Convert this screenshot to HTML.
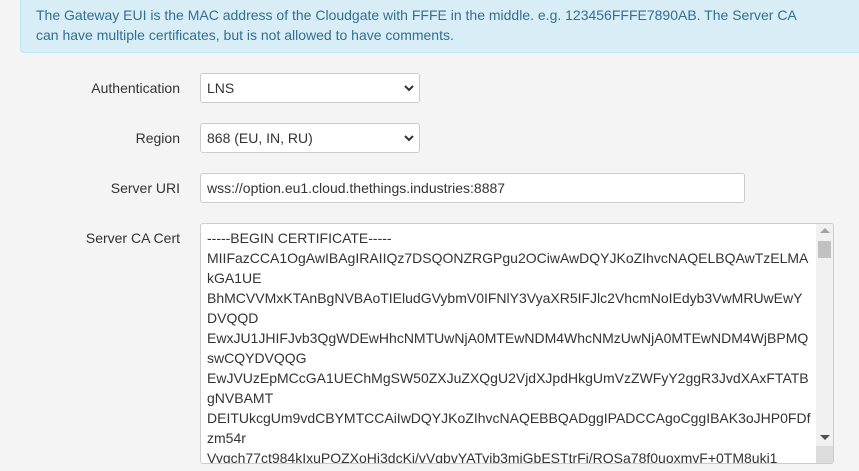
<!DOCTYPE html>
<html><head><style>
body{margin:0;background:#f4f4f4;font-family:"Liberation Sans",sans-serif;font-size:14px;color:#333;width:859px;height:471px;overflow:hidden;position:relative}
.alert{position:absolute;left:20px;top:-10px;width:860px;height:63px;background:#d9edf7;border:1px solid #bce8f1;border-radius:4px;color:#31708f;line-height:20px;box-sizing:border-box;padding:14px 15px 0 15px}
.lbl{position:absolute;right:679px;text-align:right}
.ctl{position:absolute;left:200px;background:#fff;border:1px solid #ccc;border-radius:3px;box-sizing:border-box;padding-left:6px;line-height:28px;color:#333}
.chev{position:absolute;right:5px;top:10px}
.ta{position:absolute;left:200px;top:223px;width:634px;height:241px;background:#fff;border:1px solid #ccc;border-radius:3px;box-sizing:border-box;overflow:hidden}
.tx{position:absolute;left:6px;top:4px;line-height:20px;white-space:nowrap}
.sb{position:absolute;right:0;top:0;width:17px;height:100%;background:#f1f1f1}
</style></head><body>
<div class="alert">The Gateway EUI is the MAC address of the Cloudgate with FFFE in the middle. e.g. 123456FFFE7890AB. The Server CA<br>can have multiple certificates, but is not allowed to have comments.</div>

<div class="lbl" style="top:80px">Authentication</div>
<div class="ctl" style="top:73px;width:220px;height:30px">LNS<svg class="chev" width="10" height="8" viewBox="0 0 10 8"><path d="M1 2l4 4 4-4" stroke="#333" stroke-width="2" fill="none"/></svg></div>

<div class="lbl" style="top:130px">Region</div>
<div class="ctl" style="top:123px;width:220px;height:30px">868 (EU, IN, RU)<svg class="chev" width="10" height="8" viewBox="0 0 10 8"><path d="M1 2l4 4 4-4" stroke="#333" stroke-width="2" fill="none"/></svg></div>

<div class="lbl" style="top:180px">Server URI</div>
<div class="ctl" style="top:173px;width:545px;height:30px;padding-left:6px">wss://option.eu1.cloud.thethings.industries:8887</div>

<div class="lbl" style="top:230px">Server CA Cert</div>
<div class="ta"><div class="tx">-----BEGIN CERTIFICATE-----<br>MIIFazCCA1OgAwIBAgIRAIIQz7DSQONZRGPgu2OCiwAwDQYJKoZIhvcNAQELBQAwTzELMA<br>kGA1UE<br>BhMCVVMxKTAnBgNVBAoTIEludGVybmV0IFNlY3VyaXR5IFJlc2VhcmNoIEdyb3VwMRUwEwY<br>DVQQD<br>EwxJU1JHIFJvb3QgWDEwHhcNMTUwNjA0MTEwNDM4WhcNMzUwNjA0MTEwNDM4WjBPMQ<br>swCQYDVQQG<br>EwJVUzEpMCcGA1UEChMgSW50ZXJuZXQgU2VjdXJpdHkgUmVzZWFyY2ggR3JvdXAxFTATB<br>gNVBAMT<br>DEITUkcgUm9vdCBYMTCCAiIwDQYJKoZIhvcNAQEBBQADggIPADCCAgoCggIBAK3oJHP0FDf<br>zm54r<br>Vygch77ct984kIxuPOZXoHj3dcKi/vVqbvYATyjb3miGbESTtrFj/RQSa78f0uoxmyF+0TM8ukj1</div>
<div class="sb"><div style="position:absolute;top:4px;width:0;height:0;border:5px solid transparent;border-top:0;border-bottom:5px solid #a3a3a3;left:4px"></div><div style="position:absolute;left:2px;top:17px;width:13px;height:17px;background:#c1c1c1"></div><div style="position:absolute;left:4px;top:211px;border:5px solid transparent;border-bottom:0;border-top:5px solid #505050"></div><div style="position:absolute;left:0;top:222px;width:17px;height:19px;background:#dcdcdc"></div></div>
</div>
</body></html>
